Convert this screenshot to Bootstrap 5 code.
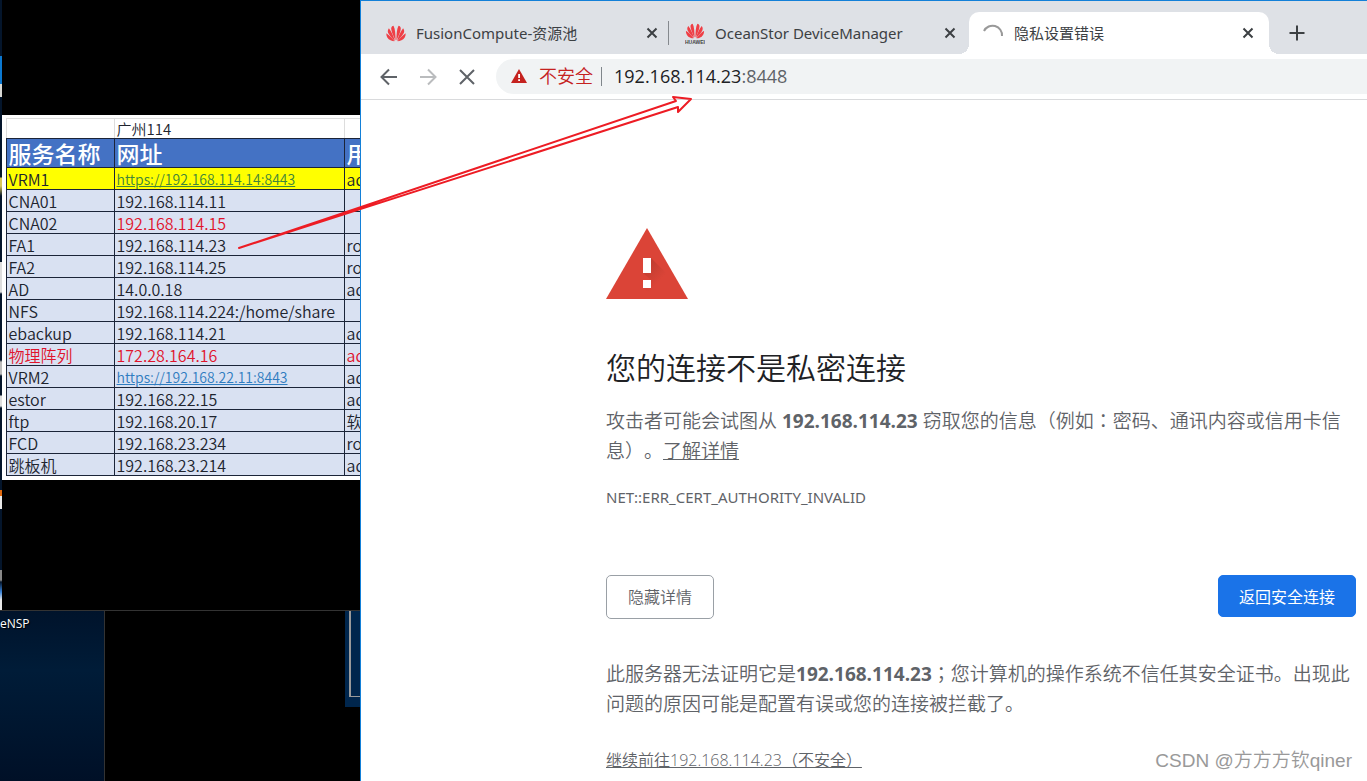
<!DOCTYPE html>
<html lang="zh-CN">
<head>
<meta charset="utf-8">
<meta name="viewport" content="width=device-width, initial-scale=1">
<title>隐私设置错误</title>
<link href="https://cdn.jsdelivr.net/npm/bootstrap@5.3.0/dist/css/bootstrap.min.css" rel="stylesheet">
<style>
body{font-family:"Open Sans","Noto Sans CJK SC",sans-serif;background:#000;color:#5f6368;text-spacing-trim:space-all}
.desk{flex:0 0 360px;overflow:hidden}
.viewer{border-bottom:1px solid #333}
.edge{width:2px;background:linear-gradient(#04152b 0 56px,#0b78d0 56px 84px,#d8d8d4 84px 97px,#04152b 97px 160px,#04152b 176px 177px,#d8c65a 178px 186px,#04152b 196px 262px,#ddd 262px 292px,#04152b 294px 360px,#bbb 362px 374px,#04152b 376px 395px,#ddd 396px 406px,#04152b 408px 490px,#e06a10 490px 496px,#e8e8e8 496px 509px,#04152b 509px 570px,#888 570px 580px,#04152b 582px,#3a83d8 592px,#e8e8e8 600px)}
.screen{padding:115px 0 130px}
.sheet{padding:3px 0 4px 4px;overflow:hidden;background:#fff}
.sheet table{table-layout:fixed;width:460px;border-collapse:collapse;font:16px/20px "Noto Sans CJK SC",sans-serif;color:#20242e}
.sheet td,.sheet th{border:1px solid #1b2438;padding:0 0 0 2px;height:22px;line-height:18px;background:#d9e1f2;white-space:nowrap;overflow:hidden;font-weight:350}
.sheet caption{display:none}
.sheet .top td{height:20px;line-height:19px;background:#fff;font-size:15px;border-color:#ddd #ddd #1b2438}
.sheet thead th{height:29px;line-height:27px;background:#4472c4;color:#fff;font-size:23px;font-weight:500}
.sheet .hot td{background:#ff0}
.sheet a{font-size:14px;color:#2f7cc0}
.sheet .hot a{color:#41853b}
.sheet .warn{color:#e0142c}
.wall{width:105px;border-right:1px solid #333;background:linear-gradient(#00132b,#001c38 35%,#001027);color:#fff;font:12px/16px "Open Sans",sans-serif;padding-top:5px;text-shadow:1px 1px 1px #000}
.peek{width:15px;height:96px;background:#00264d;padding:0 0 10px 4px}
.peek div{height:86px;border:solid #9a9a9a;border-width:0 0 1px 2px}
.browser{min-width:0;background:#fff;border:solid #1380d8;border-width:1px 0 0 1px}
.tabs{height:53px;background:#dee1e6;padding:11px 0 0 8px;color:#3c4043;font-size:15px;font-family:"Noto Sans","Noto Sans CJK SC",sans-serif}
.tabitem{flex:0 0 300px;height:42px;padding-left:17px;gap:10px}
.tabitem.second{padding:0 13px 0 16px}
.tabitem.active{background:#fff;border-radius:10px 10px 0 0;position:relative;padding:0 15px 0 13px}
.tabitem.active:before,.tabitem.active:after{content:"";position:absolute;bottom:0;width:10px;height:10px}
.tabitem.active:before{right:100%;background:radial-gradient(circle at 0 0,transparent 10px,#fff 10px)}
.tabitem.active:after{left:100%;background:radial-gradient(circle at 100% 0,transparent 10px,#fff 10px)}
.split{width:1px;height:24px;background:#85898e}
.icon{border:0;background:none;padding:0;line-height:0;color:#3c4043}
.tools{height:46px;border-bottom:1px solid #d9dadc;padding:0 0 0 16px;gap:15px}
.omni{background:#f1f3f4;border-radius:18px 0 0 18px;height:35px;margin-left:2px;padding-left:15px;font-size:18px}
.omni .unsafe{color:#c5221f;font-weight:350}
.omni .bar{width:1px;height:19px;background:#80868b}
.host{color:#202124}
.article{max-width:761px;margin-left:auto;padding:128px 11px 0 0}
.article h1{font-size:30px;line-height:38px;font-weight:350;color:#202124;margin:50px 0 18px}
.article p{font-size:19px;line-height:30px;font-weight:350;margin:0}
.article p strong{font-weight:700}
.article a{color:#5f6368}
.mid{font-family:"Noto Sans CJK TC",sans-serif}
.article .code{font-family:"Noto Sans",sans-serif;font-size:15px;line-height:20px;margin-top:21px;font-weight:400}
.acts{margin:68px 0 39px}
.acts .btn{font-size:16px;line-height:24px;border-radius:5px;height:44px;padding:9px 21px;font-weight:350;border-color:#9aa0a6;color:#5f6368}
.acts .btn.go{height:42px;background:#1a73e8;border-color:#1a73e8;color:#fff;font-weight:400;padding:9px 20px}
.article .more{font-size:16px;line-height:24px;margin-top:29px;font-weight:350}
.arrow{position:absolute;left:230px;top:90px;pointer-events:none}
.sign{position:absolute;right:15px;bottom:8px;font:19px/24px "Liberation Sans","Noto Sans CJK SC",sans-serif;color:#999;font-weight:350}
</style>
</head>
<body>
<div class="d-flex vh-100 position-relative overflow-hidden">
<aside class="desk d-flex flex-column">
<div class="viewer d-flex">
<div class="edge"></div>
<div class="screen flex-grow-1 overflow-hidden">
<div class="sheet">
<table>
<caption>服务列表</caption>
<colgroup><col style="width:108px"><col style="width:230px"><col></colgroup>
<thead>
<tr class="top"><td></td><td>广州114</td><td></td></tr>
<tr><th>服务名称</th><th>网址</th><th>用</th></tr>
</thead>
<tbody>
<tr class="hot"><td>VRM1</td><td><a href="#">https://192.168.114.14:8443</a></td><td>ad</td></tr>
<tr><td>CNA01</td><td>192.168.114.11</td><td></td></tr>
<tr><td>CNA02</td><td class="warn">192.168.114.15</td><td></td></tr>
<tr><td>FA1</td><td>192.168.114.23</td><td>ro</td></tr>
<tr><td>FA2</td><td>192.168.114.25</td><td>ro</td></tr>
<tr><td>AD</td><td>14.0.0.18</td><td>ad</td></tr>
<tr><td>NFS</td><td>192.168.114.224:/home/share</td><td></td></tr>
<tr><td>ebackup</td><td>192.168.114.21</td><td>ad</td></tr>
<tr><td class="warn">物理阵列</td><td class="warn">172.28.164.16</td><td class="warn">ad</td></tr>
<tr><td>VRM2</td><td><a href="#">https://192.168.22.11:8443</a></td><td>ad</td></tr>
<tr><td>estor</td><td>192.168.22.15</td><td>ad</td></tr>
<tr><td>ftp</td><td>192.168.20.17</td><td>软</td></tr>
<tr><td>FCD</td><td>192.168.23.234</td><td>ro</td></tr>
<tr><td>跳板机</td><td>192.168.23.214</td><td>ad</td></tr>
</tbody>
</table>
</div>
</div>
</div>
<div class="d-flex flex-grow-1 justify-content-between">
<div class="wall">eNSP</div>
<div class="peek"><div></div></div>
</div>
</aside>
<main class="browser flex-grow-1">
<svg width="0" height="0" class="position-absolute"><defs>
<symbol id="petals" viewBox="0 0 20 17"><g fill="#ef3f46"><path d="M9.600 15.500C9.400 9 9.200 4 7.500.8 5.200 1.200 4.800 3.200 5.500 5.500 6.200 8.500 8 12.500 9.600 15.500z"/><path d="M9 16C7.500 11 5.500 6.500 2.900 3.200 1.500 5 1.300 7 3 9.200 4.800 12 7 14.300 9 16z"/><path d="M8.500 16.300C6.200 13.300 3.500 10.300.3 8.300.2 12 2 14.300 4.500 15.300 6 15.900 7.200 16.200 8.500 16.300z"/></g></symbol>
<symbol id="flower" viewBox="0 0 20 17"><use href="#petals" width="20" height="17"/><use href="#petals" width="20" height="17" transform="translate(20 0) scale(-1 1)"/></symbol>
<symbol id="cross" viewBox="0 0 12 12"><path d="M1.500 1.500l9 9m0-9l-9 9" stroke="currentColor" stroke-width="2"/></symbol>
</defs></svg>
<nav class="tabs d-flex">
<div class="tabitem d-flex align-items-center"><svg width="20" height="17"><use href="#flower"/></svg><span class="flex-grow-1">FusionCompute-资源池</span><button class="icon" aria-label="关闭"><svg width="12" height="12"><use href="#cross"/></svg></button><span class="split"></span></div>
<div class="tabitem second d-flex align-items-center"><svg width="20" height="21"><use href="#flower" width="20" height="16"/><text x="0" y="21" font-size="5" font-weight="700" fill="#444" font-family="Liberation Sans">HUAWEI</text></svg><span class="flex-grow-1">OceanStor DeviceManager</span><button class="icon" aria-label="关闭"><svg width="12" height="12"><use href="#cross"/></svg></button></div>
<div class="tabitem active d-flex align-items-center"><svg width="22" height="22" fill="none" stroke="#999" stroke-width="2"><path d="M2 9A9.500 9.500 0 0 1 20 14"/></svg><span class="flex-grow-1">隐私设置错误</span><button class="icon" aria-label="关闭"><svg width="12" height="12"><use href="#cross"/></svg></button></div>
<button class="icon align-self-center ms-3 px-1" aria-label="新标签页"><svg width="16" height="16" stroke="#3c4043" stroke-width="2"><path d="M8 .5v15M.5 8h15"/></svg></button>
</nav>
<div class="tools d-flex align-items-center">
<button class="icon" aria-label="后退"><svg width="24" height="24" fill="none" stroke="#5f6368" stroke-width="2"><path d="M20 12H4.500M12 4.500L4.500 12l7.500 7.500"/></svg></button>
<button class="icon" aria-label="前进"><svg width="24" height="24" fill="none" stroke="#babcbe" stroke-width="2"><path d="M4 12h15.500M12 4.500l7.500 7.500-7.500 7.500"/></svg></button>
<button class="icon" aria-label="停止"><svg width="24" height="24" stroke="#5f6368" stroke-width="2"><path d="M5 5l14 14m0-14L5 19"/></svg></button>
<div class="omni d-flex align-items-center flex-grow-1">
<svg width="16" height="15"><path d="M8 0l8 14H0z" fill="#c5221f"/><path d="M7.200 5h1.800v4H7.200zm0 5.200h1.800V12H7.200z" fill="#fff"/></svg>
<span class="unsafe ms-2 ps-1">不安全</span><span class="bar ms-2"></span>
<span class="ms-2 ps-1"><span class="host">192.168.114.23</span>:8448</span>
</div>
</div>
<section class="article">
<svg class="d-block" width="82" height="71"><defs><linearGradient id="sh" x2="1" y2="1"><stop stop-color="#b63a2e"/><stop offset=".5" stop-color="#db4437"/></linearGradient></defs><path d="M41 0l41 71H0z" fill="#db4437"/><path d="M45 30l18 18 12 23H49L37 59l8-2v-5L37 45z" fill="url(#sh)"/><path d="M37 30h8v15h-8zm0 22h8v8h-8z" fill="#fff"/></svg>
<h1>您的连接不是私密连接</h1>
<p>攻击者可能会试图从 <strong>192.168.114.23</strong> 窃取您的信息（例如<span class="mid" lang="zh-TW">：</span>密码、通讯内容或信用卡信息）。<a href="#">了解详情</a></p>
<p class="code">NET::ERR_CERT_AUTHORITY_INVALID</p>
<div class="acts d-flex justify-content-between align-items-start"><button class="btn">隐藏详情</button><button class="btn go">返回安全连接</button></div>
<p>此服务器无法证明它是<strong>192.168.114.23</strong><span class="mid" lang="zh-TW">；</span>您计算机的操作系统不信任其安全证书。出现此问题的原因可能是配置有误或您的连接被拦截了。</p>
<p class="more"><a href="#">继续前往192.168.114.23（不安全）</a></p>
</section>
</main>
<svg class="arrow" width="470" height="165" fill="none" stroke="#ed1c24" stroke-width="2"><path d="M9 158L446 11l-3-4 18 2-13 13v-5z" stroke-linejoin="round"/></svg>
<div class="sign">CSDN @方方方钦qiner</div>
</div>
<script src="https://cdn.jsdelivr.net/npm/bootstrap@5.3.0/dist/js/bootstrap.bundle.min.js"></script>
</body>
</html>
